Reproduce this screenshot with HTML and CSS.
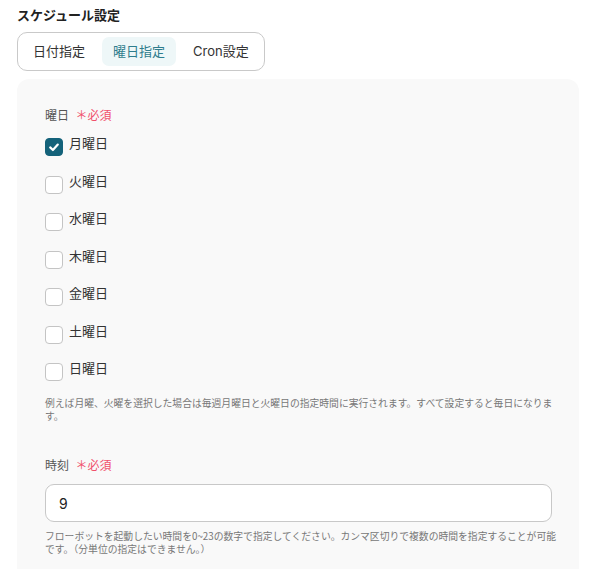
FILE: index.html
```html
<!DOCTYPE html>
<html lang="ja">
<head>
    <meta charset="UTF-8">
    <meta name="viewport" content="width=device-width, initial-scale=1.0">
    <title>スケジュール設定</title>
    <link rel="stylesheet" href="styles.css">
</head>
<body>
    <div class="schedule">
        <h2 class="schedule-title">スケジュール設定</h2>

        <div class="tabs">
            <button class="tab">日付指定</button>
            <button class="tab active">曜日指定</button>
            <button class="tab">Cron設定</button>
        </div>

        <div class="panel">
            <div class="field">
                <div class="field-label">曜日 <span class="required">＊必須</span></div>
                <ul class="day-list">
                    <li class="day"><span class="check checked"><svg width="18" height="18" viewBox="0 0 18 18"><polyline points="5.2,9.4 7.9,12 12.8,6.6" fill="none" stroke="#fff" stroke-width="2.2" stroke-linecap="round" stroke-linejoin="round"/></svg></span>月曜日</li>
                    <li class="day"><span class="check"></span>火曜日</li>
                    <li class="day"><span class="check"></span>水曜日</li>
                    <li class="day"><span class="check"></span>木曜日</li>
                    <li class="day"><span class="check"></span>金曜日</li>
                    <li class="day"><span class="check"></span>土曜日</li>
                    <li class="day"><span class="check"></span>日曜日</li>
                </ul>
                <p class="help">例えば月曜、火曜を選択した場合は毎週月曜日と火曜日の指定時間に実行されます。すべて設定すると毎日になります。</p>
            </div>

            <div class="field field-time">
                <div class="field-label">時刻 <span class="required">＊必須</span></div>
                <input class="text-input" type="text" value="9">
                <p class="help">フローボットを起動したい時間を0~23の数字で指定してください。カンマ区切りで複数の時間を指定することが可能です。（分単位の指定はできません。）</p>
            </div>
        </div>
    </div>
</body>
</html>
```

FILE: styles.css
```css
body {
    margin: 0;
    background-color: #fff;
    font-family: Inter, "Noto Sans CJK JP", sans-serif;
    color: #333;
}
.schedule {
    width: 562px;
    padding: 6px 0 0 17px;
}
.schedule-title {
    margin: 0 0 8px 0;
    font-size: 13px;
    line-height: 18px;
    font-weight: 700;
    color: #222;
}
.tabs {
    display: inline-flex;
    gap: 6px;
    padding: 4px;
    border: 1px solid #c9c9c9;
    border-radius: 10px;
}
.tab {
    font-family: inherit;
    font-size: 13px;
    line-height: 29px;
    padding: 0 11px;
    border: none;
    border-radius: 7px;
    background: none;
    color: #333;
}
.tab.active {
    background-color: #eef7f8;
    color: #2f7d8d;
}
.panel {
    margin-top: 8px;
    padding: 28px 27px 30px 28px;
    background-color: #f9f9f9;
    border-radius: 12px;
}
.field-label {
    font-size: 12px;
    line-height: 18px;
    color: #555;
}
.required {
    margin-left: 3px;
    color: #f0506b;
}
.day-list {
    list-style: none;
    margin: 8px 0 0 0;
    padding: 0;
    display: flex;
    flex-direction: column;
    gap: 14.5px;
}
.day {
    display: flex;
    align-items: flex-start;
    gap: 6px;
    font-size: 13px;
    line-height: 20px;
    color: #333;
}
.check {
    box-sizing: border-box;
    flex: none;
    width: 18px;
    height: 18px;
    margin-top: 5px;
    background-color: #fff;
    border: 1px solid #c4c4c4;
    border-radius: 4px;
}
.check.checked {
    background-color: #14627a;
    border-color: #14627a;
}
.check svg {
    display: block;
    margin: -1px;
}
.help {
    width: 514px;
    margin: 16px 0 0 0;
    font-family: "Noto Sans CJK JP", sans-serif;
    font-size: 9.8px;
    line-height: 13px;
    color: #777;
}
.field-time {
    margin-top: 34px;
}
.text-input {
    display: block;
    box-sizing: border-box;
    width: 100%;
    height: 38px;
    margin-top: 9px;
    padding: 0 13px;
    font-family: inherit;
    font-size: 14px;
    color: #222;
    background-color: #fff;
    border: 1px solid #c8c8c8;
    border-radius: 9px;
}
.field-time .help {
    margin-top: 8px;
}
```
